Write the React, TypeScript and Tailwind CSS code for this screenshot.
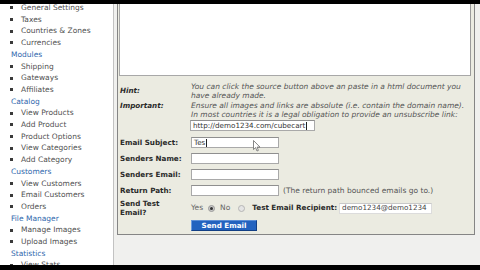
import React from "react";

type NavItem = { t: string; h?: boolean };

const nav: NavItem[] = [
  { t: "General Settings" },
  { t: "Taxes" },
  { t: "Countries & Zones" },
  { t: "Currencies" },
  { t: "Modules", h: true },
  { t: "Shipping" },
  { t: "Gateways" },
  { t: "Affiliates" },
  { t: "Catalog", h: true },
  { t: "View Products" },
  { t: "Add Product" },
  { t: "Product Options" },
  { t: "View Categories" },
  { t: "Add Category" },
  { t: "Customers", h: true },
  { t: "View Customers" },
  { t: "Email Customers" },
  { t: "Orders" },
  { t: "File Manager", h: true },
  { t: "Manage Images" },
  { t: "Upload Images" },
  { t: "Statistics", h: true },
  { t: "View Stats" },
];

function Input({ className = "", children }: { className?: string; children?: React.ReactNode }) {
  return (
    <div
      className={
        "relative h-[11px] bg-white border border-[#a9a9a9] border-t-[#8f8f8f] flex items-center pl-[2px] overflow-hidden whitespace-nowrap text-[7.2px] leading-none text-[#333] font-normal not-italic " +
        className
      }
    >
      {children}
    </div>
  );
}

function Caret() {
  return <span className="inline-block w-[1px] h-[8px] bg-[#222] ml-[0.5px]" />;
}

function Label({ children, italic = false }: { children: React.ReactNode; italic?: boolean }) {
  return (
    <div className={"w-[71px] shrink-0 font-bold text-[7.2px] text-[#2a2a2a] " + (italic ? "italic" : "")}>
      {children}
    </div>
  );
}

export default function App() {
  return (
    <div className="w-[480px] h-[270px] bg-black flex flex-col overflow-hidden font-['DejaVu_Sans',Verdana,sans-serif]">
      <div className="h-[4px] shrink-0 bg-black" />
      <div className="h-[261px] shrink-0 flex bg-white overflow-hidden">
        {/* Sidebar */}
        <div className="w-[114px] shrink-0 bg-white border-r border-[#c2c2c2] overflow-hidden">
          <div className="-mt-[2px] pl-[10px] text-[7.5px] leading-[11.7px]">
            {nav.map((n, i) =>
              n.h ? (
                <div key={i} className="pl-[1px] text-[#2f68ad] whitespace-nowrap">
                  {n.t}
                </div>
              ) : (
                <div key={i} className="flex items-center whitespace-nowrap text-[#505050]">
                  <span className="w-[3px] h-[3px] bg-[#3a3a3a] shrink-0" />
                  <span className="ml-[8px]">{n.t}</span>
                </div>
              )
            )}
          </div>
        </div>

        {/* Main */}
        <div className="flex-1 bg-[#f0f0ee] pl-[3px] overflow-hidden">
          <div className="-mt-[6px] w-[358px] border border-[#858585] bg-[#ebebe1] pl-[1px] pb-[2.5px]">
            <div className="h-[77px] w-[352px] bg-white border border-[#a8a8a8] border-r-[#9a9a9a]" />
            <div className="pl-[1px] pt-[5.5px] text-[7.5px] leading-[9.5px] text-[#444]">
              {/* Hint */}
              <div className="flex items-center h-[19px]">
                <Label italic>Hint:</Label>
                <div className="italic text-[#555] whitespace-nowrap">
                  <div>You can click the source button above an paste in a html document you</div>
                  <div>have already made.</div>
                </div>
              </div>
              {/* Important */}
              <div className="flex items-start">
                <Label italic>Important:</Label>
                <div className="whitespace-nowrap">
                  <div className="italic text-[#555]">
                    Ensure all images and links are absolute (i.e. contain the domain name).
                  </div>
                  <div className="italic text-[#555]">
                    In most countries it is a legal obligation to provide an unsubscribe link:
                  </div>
                  <Input className="w-[125px] mt-[0.5px] -ml-[1px]">
                    <span>http://demo1234.com/cubecart</span>
                    <Caret />
                  </Input>
                </div>
              </div>
              {/* Email Subject */}
              <div className="flex items-center mt-[6px]">
                <Label>Email Subject:</Label>
                <div className="relative">
                  <Input className="w-[88px]">
                    <span>Tes</span>
                    <Caret />
                  </Input>
                  <svg
                    className="absolute left-[62px] top-[3px]"
                    width="8"
                    height="12"
                    viewBox="0 0 8 12"
                  >
                    <path
                      d="M0.5 0.5 L0.5 9.5 L2.6 7.6 L4 11 L5.4 10.4 L4.1 7.1 L7 7.1 Z"
                      fill="#ffffff"
                      stroke="#6a6a6a"
                      strokeWidth="0.8"
                      strokeLinejoin="round"
                    />
                  </svg>
                </div>
              </div>
              {/* Senders Name */}
              <div className="flex items-center mt-[5px]">
                <Label>Senders Name:</Label>
                <Input className="w-[88px]" />
              </div>
              {/* Senders Email */}
              <div className="flex items-center mt-[5px]">
                <Label>Senders Email:</Label>
                <Input className="w-[88px]" />
              </div>
              {/* Return Path */}
              <div className="flex items-center mt-[5px]">
                <Label>Return Path:</Label>
                <Input className="w-[88px]" />
                <span className="ml-[4px] text-[#555] whitespace-nowrap">
                  (The return path bounced emails go to.)
                </span>
              </div>
              {/* Send Test Email */}
              <div className="flex items-center mt-[3px]">
                <Label>
                  <div className="leading-[9px]">Send Test</div>
                  <div className="leading-[9px]">Email?</div>
                </Label>
                <div className="flex items-center whitespace-nowrap">
                  <span className="text-[#666]">Yes</span>
                  <span className="ml-[5px] w-[7px] h-[7px] rounded-full bg-[#c9c9c9] border border-[#9a9a9a] flex items-center justify-center">
                    <span className="w-[3px] h-[3px] rounded-full bg-[#333]" />
                  </span>
                  <span className="ml-[5px] text-[#666]">No</span>
                  <span className="ml-[8px] w-[7px] h-[7px] rounded-full bg-[#e4e4e4] border border-[#b5b5b5]" />
                  <span className="ml-[7px] font-bold text-[7.2px] text-[#2a2a2a]">Test Email Recipient:</span>
                  <Input className="ml-[2px] w-[93px] border-[#dcdcdc] border-t-[#c8c8c8]">
                    <span className="text-[#444]">demo1234@demo1234</span>
                  </Input>
                </div>
              </div>
              {/* Button */}
              <div className="flex mt-[3px]">
                <div className="w-[71px] shrink-0" />
                <div className="w-[66px] h-[11px] bg-[#2363bf] border border-[#123f85] border-l-[#6d9ce0] border-t-[#5d8fd6] flex items-center justify-center text-white font-bold text-[7.2px] leading-none">
                  Send Email
                </div>
              </div>
            </div>
          </div>
        </div>
      </div>
      <div className="flex-1 bg-black" />
    </div>
  );
}
